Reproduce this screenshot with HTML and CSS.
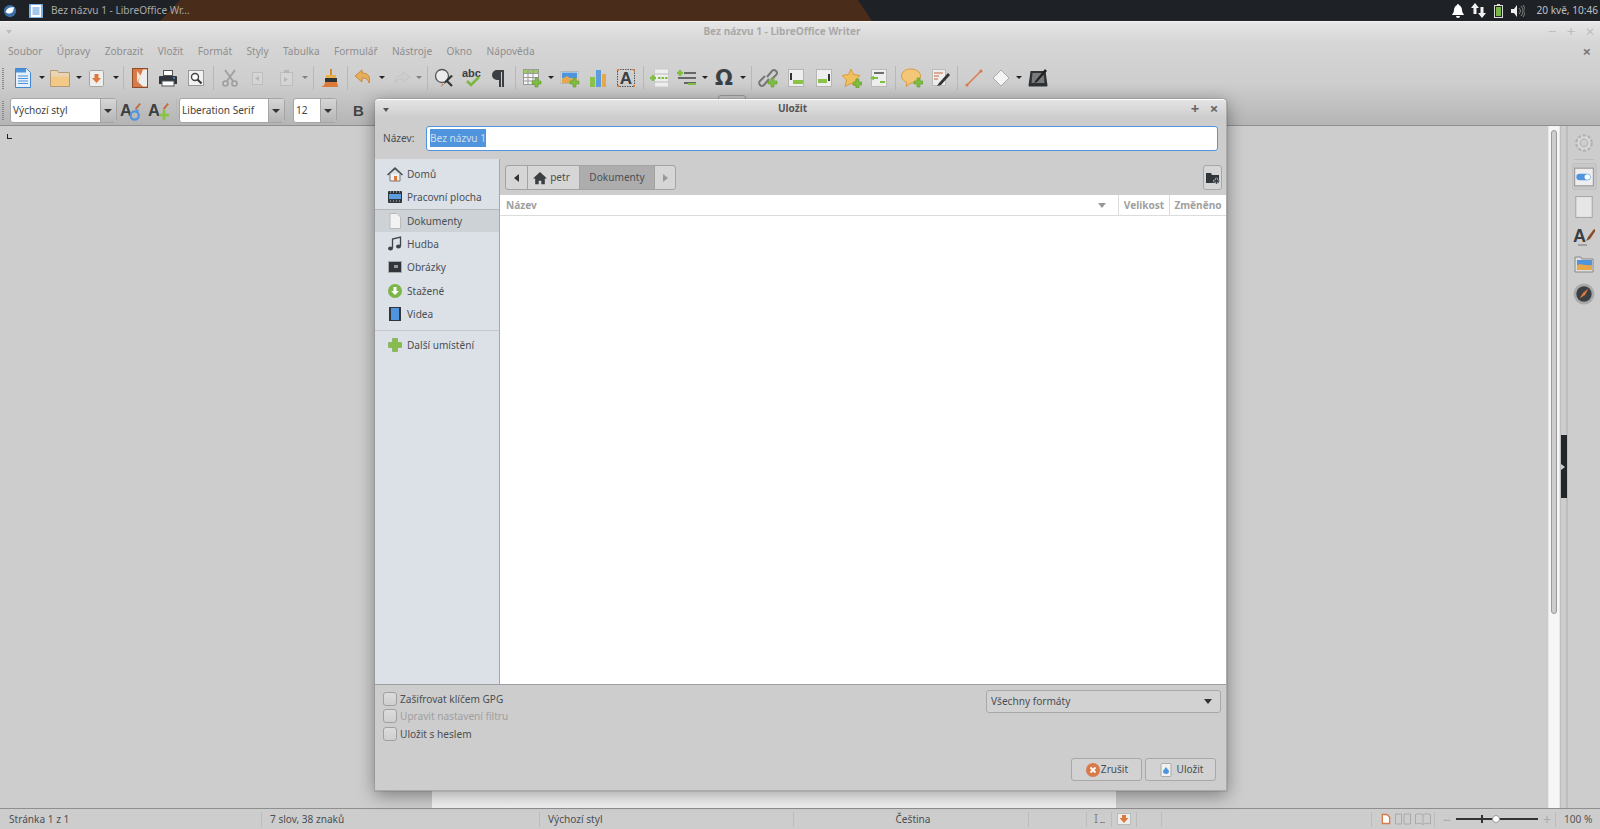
FILE: index.html
```html
<!DOCTYPE html>
<html lang="cs">
<head>
<meta charset="utf-8">
<title>Bez názvu 1 - LibreOffice Writer</title>
<link rel="stylesheet" href="styles.css">
</head>
<body>
<svg class="defs" aria-hidden="true">
  <symbol id="plus" viewBox="0 0 20 20"><path d="M10 11h3V8h3v3h3v3h-3v3h-3v-3h-3z" fill="#7fbf3f" stroke="#5f9a2c" stroke-width=".6"/></symbol>
  <symbol id="new" viewBox="0 0 20 20"><path d="M2.500 .5h11l4 4v15h-15z" fill="#e6effa" stroke="#3e88d0"/><path d="M3 1h10v3.500H3z" fill="#4b92d8"/><path d="M5 8h10M5 10.500h10M5 13h10M5 15.500h10" stroke="#4b92d8"/></symbol>
  <symbol id="folder" viewBox="0 0 20 20"><path d="M.5 4.500V2.500h7l1 2h11v14H.5z" fill="#e9d5b4" stroke="#b49a78"/><path d="M1 8.500h18v9.500H1z" fill="#f2c987"/></symbol>
  <symbol id="save" viewBox="0 0 20 20"><rect x="2.500" y="2.500" width="14" height="16" rx="1" fill="#eee" stroke="#a5a5a5"/><path d="M7.500 6h4v4h2.500l-4.500 5L5 10h2.500z" fill="#dd7a3a"/></symbol>
  <symbol id="pdf" viewBox="0 0 20 20"><rect x="2.500" y=".5" width="15" height="19" fill="#d87a49" stroke="#8d4c28"/><path d="M13 1.500h4v17h-4L8 14z" fill="#eee"/><path d="M7 3l4 5-4 6z" fill="#f4e6d8"/></symbol>
  <symbol id="print" viewBox="0 0 20 20"><rect x="5.500" y="2.500" width="9" height="5" fill="#fff" stroke="#555"/><path d="M2 8h16a1 1 0 0 1 1 1v7H1V9a1 1 0 0 1 1-1z" fill="#30363c"/><rect x="4" y="13" width="12" height="5" fill="#fff" stroke="#555"/><path d="M15 10h2" stroke="#4f94dc" stroke-width="1.500"/></symbol>
  <symbol id="preview" viewBox="0 0 20 20"><rect x="2.500" y="2.500" width="15" height="15" fill="#f2f2f2" stroke="#999"/><circle cx="9" cy="9" r="3.500" fill="#fff" stroke="#444" stroke-width="1.400"/><path d="M11.500 11.500l4 4" stroke="#333" stroke-width="2"/></symbol>
  <symbol id="cut" viewBox="0 0 20 20"><path d="M5 2l8 11M15 2L7 13" stroke="#666" stroke-width="1.800" fill="none"/><circle cx="5.500" cy="15.500" r="2.500" fill="none" stroke="#666" stroke-width="1.600"/><circle cx="14.500" cy="15.500" r="2.500" fill="none" stroke="#666" stroke-width="1.600"/></symbol>
  <symbol id="copy" viewBox="0 0 20 20"><rect x="4.500" y="4.500" width="10" height="12" fill="#ddd" stroke="#aaa"/><path d="M11 8l-4 2.500 4 2.500z" fill="#999"/></symbol>
  <symbol id="paste" viewBox="0 0 20 20"><rect x="4.500" y="4.500" width="12" height="13" fill="#ddd" stroke="#aaa"/><path d="M8 2h5v3H8z" fill="#999"/><path d="M8 9l4 2.500L8 14z" fill="#999"/></symbol>
  <symbol id="brush" viewBox="0 0 20 20"><path d="M10 1h2v7h-2z" fill="#d98a2f"/><path d="M6 7h10v3H6z" fill="#e8b04c"/><path d="M5 10h12v4H5z" fill="#2f3338"/><path d="M5 14h12l1 5H1c2-1 4-2 4-5z" fill="#dd7a3a"/></symbol>
  <symbol id="undo" viewBox="0 0 20 20"><path d="M8 2L1 8l7 6v-4c4 0 6 1 7 5 2-6-1-10-7-10z" fill="#e8ad5a" stroke="#c98a3a"/></symbol>
  <symbol id="redo" viewBox="0 0 20 20"><path d="M12 4l7 5-7 5v-3c-4 0-6 1-7 4-1-5 1-8 7-8z" fill="#ccc" stroke="#b5b5b5"/></symbol>
  <symbol id="find" viewBox="0 0 20 20"><circle cx="8" cy="8" r="6.500" fill="#ececec" stroke="#555" stroke-width="1.300"/><path d="M12.500 12.500l5.500 5.500" stroke="#333" stroke-width="2.200"/><path d="M19 8l-6 6-3 2 1-3 6-6z" fill="#333"/><path d="M10 16l-3 3 1-3z" fill="#dd7a3a"/></symbol>
  <symbol id="para" viewBox="0 0 20 20"><path d="M15 2H8a5 5 0 0 0 0 10h2v7h2V4h1v15h2z" fill="#3a3f44"/></symbol>
  <symbol id="table" viewBox="0 0 20 20"><rect x="1.500" y="1.500" width="15" height="15" fill="#f6f6f6" stroke="#999"/><path d="M2 2h14v3H2z" fill="#9ccb62"/><path d="M1.500 5.500h15M1.500 9.500h15M1.500 13h15M6 2v14M11 2v14" stroke="#999" fill="none"/><use href="#plus" width="20" height="20" x="0" y="2"/></symbol>
  <symbol id="image" viewBox="0 0 20 20"><rect x="1" y="3.500" width="17" height="12" fill="#eee" stroke="#b5b5b5"/><path d="M2 4.500h15v6H2z" fill="#4f94dc"/><path d="M2 11l5-3 4 3 6-1v5H2z" fill="#e8a84a"/><use href="#plus" width="20" height="20" x="0" y="2"/></symbol>
  <symbol id="chart" viewBox="0 0 20 20"><path d="M2 9h5v10H2z" fill="#8bc34a"/><path d="M8 2h5v17H8z" fill="#5c9de0"/><path d="M14 6h4v13h-4z" fill="#e8a84a"/></symbol>
  <symbol id="field" viewBox="0 0 20 20"><rect x="4.500" y="1" width="14" height="18" fill="#eee" stroke="#ccc"/><path d="M4 6h15M4 14h15" stroke="#bbb"/><path d="M8 10h10" stroke="#7fbf3f" stroke-width="2" stroke-dasharray="2.500 1"/><path d="M0 10h6M3 7v6" stroke="#7fbf3f" stroke-width="2.400"/></symbol>
  <symbol id="list" viewBox="0 0 20 20"><path d="M7 5h12M1 10h18M7 15h12" stroke="#444" stroke-width="1.500"/><path d="M0 5h6M3 2v6" stroke="#7fbf3f" stroke-width="2.400"/><path d="M11 16h8" stroke="#7fbf3f" stroke-width="2"/></symbol>
  <symbol id="link" viewBox="0 0 20 20"><path d="M9 9l5-6a2.500 2.500 0 0 1 4 4l-5 5M11 11l-5 6a2.500 2.500 0 0 1-4-4l5-5" fill="none" stroke="#777" stroke-width="2"/><use href="#plus" width="20" height="20" x="0" y="2"/></symbol>
  <symbol id="foot" viewBox="0 0 20 20"><rect x="2.500" y="1.500" width="15" height="17" fill="#eee" stroke="#b5b5b5"/><path d="M4 5h2v7H4z" fill="#333"/><path d="M7 12h10v4H7z" fill="#8bc34a"/></symbol>
  <symbol id="end" viewBox="0 0 20 20"><rect x="2.500" y="1.500" width="15" height="17" fill="#eee" stroke="#b5b5b5"/><path d="M14 6h2v7h-2z" fill="#333"/><path d="M4 11h9v4H4z" fill="#8bc34a"/></symbol>
  <symbol id="star" viewBox="0 0 20 20"><path d="M9 1l2.500 5.500L18 7.500l-4.500 4.500 1 6.500L9 15.500l-6 3 1.500-6.500L0 7.500 6.500 6.500z" fill="#f0c05e" stroke="#dd9a3f"/><use href="#plus" width="20" height="20" x="1" y="3"/></symbol>
  <symbol id="xref" viewBox="0 0 20 20"><rect x="2.500" y="1.500" width="15" height="17" fill="#eee" stroke="#bbb"/><path d="M5 5h10" stroke="#444" stroke-width="1.500"/><path d="M1 10l4-2.500v1.500h4v2H5v1.500z" fill="#7fbf3f"/><path d="M11 14h5" stroke="#7fbf3f" stroke-width="2"/></symbol>
  <symbol id="comment" viewBox="0 0 22 20"><path d="M10 1c5.500 0 9.500 3 9.500 7s-4 7-9.500 7l-5 3.500 1-4C3 13 .5 11 .5 8 .5 4 4.500 1 10 1z" fill="#f2c878" stroke="#dd9a3f"/><use href="#plus" width="20" height="20" x="3" y="2"/></symbol>
  <symbol id="track" viewBox="0 0 20 20"><rect x="2.500" y="1.500" width="13" height="16" fill="#eee" stroke="#bbb"/><path d="M4 5h9M4 8h5M4 11h4" stroke="#c5683a"/><path d="M18 5L9 15l-2 3 4-1 9-10z" fill="#333"/></symbol>
  <symbol id="line" viewBox="0 0 20 20"><path d="M3 17L17 3" stroke="#d87a49" stroke-width="1.400"/><circle cx="3" cy="17" r="1.600" fill="#d87a49"/><circle cx="17" cy="3" r="1.600" fill="#d87a49"/></symbol>
  <symbol id="diamond" viewBox="0 0 20 20"><path d="M10 2l8 8-8 8-8-8z" fill="#f4f4f4" stroke="#aaa"/></symbol>
  <symbol id="draw" viewBox="0 0 20 20"><path d="M2.500 3h15l2 14.500a1 1 0 0 1-1 1h-17a1 1 0 0 1-1-1z" fill="#2d3237"/><path d="M4.500 5h11l1 10h-13z" fill="#7a7a7a"/><path d="M17 1L8 12l-2 3 3-1 10-11z" fill="#222"/></symbol>
  <symbol id="home" viewBox="0 0 16 16"><path d="M8 1L0 8.500h2.500V15h4v-4h3v4h4V8.500H16z" fill="#3a3f44"/></symbol>
  <symbol id="home2" viewBox="0 0 16 16"><path d="M3 8v7h10V8" fill="#f2f2f2" stroke="#777"/><path d="M8 1L0 8.500l1 1L8 3.500l7 6 1-1z" fill="#4a4f54"/><path d="M7 10h3v5H7z" fill="#dd7a3a"/></symbol>
  <symbol id="desk" viewBox="0 0 16 16"><rect x="1" y="2" width="14" height="12" rx="1" fill="#30363c"/><path d="M2 5h12v5H2z" fill="#5c9de0"/><path d="M3 3h1M6 3h1M9 3h1M12 3h1M3 12h1M6 12h1M9 12h1M12 12h1" stroke="#ccc"/></symbol>
  <symbol id="doc" viewBox="0 0 16 16"><path d="M3 .500h7l3.500 3.500v11.500H3z" fill="#f2f2f2" stroke="#bbb"/></symbol>
  <symbol id="music" viewBox="0 0 16 16"><path d="M5.500 12V3l8-2v9" fill="none" stroke="#3e4348" stroke-width="1.300"/><ellipse cx="3.500" cy="12.500" rx="2.500" ry="2" fill="#3e4348"/><ellipse cx="11.500" cy="10.500" rx="2.500" ry="2" fill="#3e4348"/></symbol>
  <symbol id="pics" viewBox="0 0 16 16"><rect x="1.500" y="2.500" width="13" height="11" fill="#30363c" stroke="#aaa"/><rect x="7" y="6" width="4" height="3" fill="#999"/></symbol>
  <symbol id="down" viewBox="0 0 16 16"><circle cx="8" cy="8" r="7" fill="#7ab648"/><path d="M6.500 4h3v4h2.500L8 12 4 8h2.500z" fill="#fff"/></symbol>
  <symbol id="video" viewBox="0 0 16 16"><rect x="2" y="1" width="12" height="14" fill="#30363c"/><rect x="4" y="2" width="8" height="12" fill="#4f94dc"/></symbol>
  <symbol id="more" viewBox="0 0 16 16"><path d="M5.500 1.500h5v4h4v5h-4v4h-5v-4h-4v-5h4z" fill="#86bc4c" stroke="#6f9f3c" stroke-width=".5"/></symbol>
  <symbol id="newfolder" viewBox="0 0 16 16"><path d="M1 3h5l1 2h7v8H1z" fill="#30363c"/><path d="M8.500 10h2V8h2v2h2v2h-2v2h-2v-2h-2z" fill="#30363c" stroke="#d6d6d6" stroke-width=".5"/></symbol>
  <symbol id="gear" viewBox="0 0 20 20"><circle cx="10" cy="10" r="7" fill="#ddd" stroke="#aaa" stroke-width="2" stroke-dasharray="3 1.500"/><circle cx="10" cy="10" r="3.500" fill="#cdcdcd" stroke="#aaa"/></symbol>
  <symbol id="props" viewBox="0 0 20 20"><rect x="1.500" y="2" width="17" height="16" fill="#eee" stroke="#999"/><rect x="3" y="7" width="13" height="6" rx="3" fill="#4f94dc"/><circle cx="13" cy="10" r="2.500" fill="#fff"/></symbol>
  <symbol id="page" viewBox="0 0 20 20"><rect x="2.500" y=".5" width="15" height="19" fill="#e6e6e6" stroke="#aaa"/></symbol>
  <symbol id="gallery" viewBox="0 0 22 20"><path d="M2 2h6l1 2h11v13H2z" fill="#ddd" stroke="#888"/><path d="M4 5h15v10H4z" fill="#4f94dc"/><path d="M4 10c5-2 6 1 15 0v5H4z" fill="#e8a84a"/></symbol>
  <symbol id="nav" viewBox="0 0 20 20"><circle cx="10" cy="10" r="9.500" fill="#aaa"/><circle cx="10" cy="10" r="7" fill="#3a3f44"/><path d="M14 5l-3 6-5 3 3-5z" fill="#dd7a3a"/></symbol>
  <symbol id="zrusit" viewBox="0 0 16 16"><circle cx="8" cy="8" r="7" fill="#d87a49"/><path d="M5.500 5.500l5 5M10.500 5.500l-5 5" stroke="#fff" stroke-width="1.800"/></symbol>
  <symbol id="ulozit" viewBox="0 0 16 16"><rect x="3" y="1.500" width="10" height="13" rx="1" fill="#f0f0f0" stroke="#aaa"/><path d="M8 5l3 4a3 3 0 0 1-6 0z" fill="#4f94dc"/></symbol>
</svg>

<header class="panel">
  <svg class="ic panel-logo" viewBox="0 0 16 16"><circle cx="8" cy="8" r="7" fill="#3c6ea8"/><path d="M3 9c1-4 5-6 10-5-1 1-1 2-1 3-1 4-6 5-9 2z" fill="#fff"/></svg>
  <div class="task">
    <svg class="ic task-ic" viewBox="0 0 14 14"><rect width="14" height="14" rx="1" fill="#7fb0e6"/><rect x="2" y="1" width="10" height="12" fill="#fff"/><path d="M3.500 4h7M3.500 6h7M3.500 8h7M3.500 10h7" stroke="#4b92d8"/></svg>
    <span>Bez názvu 1 - LibreOffice Wr...</span>
  </div>
  <div class="tray">
    <svg class="ic tray-bell" viewBox="0 0 12 14"><path d="M6 0c-1 0-1 1-1 1-2 1-3 3-3 5 0 3-2 4-2 5h12c0-1-2-2-2-5 0-2-1-4-3-5 0 0 0-1-1-1zM4 12a2 2 0 0 0 4 0z" fill="#fff"/></svg>
    <svg class="ic tray-net" viewBox="0 0 15 15"><path d="M4 0l4 5H5.500v6h-3V5H0zM11 15l4-5h-2.500V4h-3v6H7z" fill="#f2f2f2"/></svg>
    <svg class="ic tray-bat" viewBox="0 0 9 14"><path d="M3 0h3v1h3v13H0V1h3z" fill="#ddd"/><rect x="1" y="2" width="7" height="11" fill="#222"/><rect x="2" y="3" width="5" height="9" fill="#7ab648"/></svg>
    <svg class="ic tray-vol" viewBox="0 0 14 12"><path d="M0 4h3l3-4v12L3 8H0z" fill="#eee"/><path d="M8 3a4 4 0 0 1 0 6M10 1a7 7 0 0 1 0 10M12 0a9 9 0 0 1 0 12" fill="none" stroke="#888"/></svg>
    <time class="clock">20 kvě, 10:46</time>
  </div>
</header>

<main class="app">
  <div class="chrome">
    <div class="titlebar">
      <span class="wm-menu"></span>
      <span class="title">Bez názvu 1 - LibreOffice Writer</span>
      <span class="wm-buttons"><span>−</span><span>+</span><span>×</span></span>
    </div>
    <nav class="menubar">
      <span>Soubor</span><span>Úpravy</span><span>Zobrazit</span><span>Vložit</span><span>Formát</span><span>Styly</span><span>Tabulka</span><span>Formulář</span><span>Nástroje</span><span>Okno</span><span>Nápověda</span>
      <b class="menu-close">×</b>
    </nav>
    <div class="toolbar tb-main">
      <i class="grip"></i>
      <span class="tb"><svg class="ic20"><use href="#new"/></svg></span><span class="dd n9"></span>
      <span class="tb"><svg class="ic20"><use href="#folder"/></svg></span><span class="dd n9"></span>
      <span class="tb"><svg class="ic20"><use href="#save"/></svg></span><span class="dd n9"></span>
      <i class="sep"></i>
      <span class="tb"><svg class="ic20"><use href="#pdf"/></svg></span>
      <span class="tb"><svg class="ic20"><use href="#print"/></svg></span>
      <span class="tb"><svg class="ic20"><use href="#preview"/></svg></span>
      <i class="sep"></i>
      <span class="tb off"><svg class="ic20"><use href="#cut"/></svg></span>
      <span class="tb off"><svg class="ic20"><use href="#copy"/></svg></span>
      <span class="tb off"><svg class="ic20"><use href="#paste"/></svg></span><span class="dd off"></span>
      <i class="sep"></i>
      <span class="tb"><svg class="ic20"><use href="#brush"/></svg></span>
      <i class="sep"></i>
      <span class="tb w27"><svg class="ic20"><use href="#undo"/></svg></span><span class="dd"></span>
      <span class="tb w27 off"><svg class="ic20"><use href="#redo"/></svg></span><span class="dd off"></span>
      <i class="sep"></i>
      <span class="tb"><svg class="ic20"><use href="#find"/></svg></span>
      <span class="tb"><svg class="ic22" viewBox="0 0 22 22"><text x="1" y="10" class="svg-bold svg-abc">abc</text><path d="M6 14l4 4 8-8" fill="none" stroke="#79b83b" stroke-width="2.500"/></svg></span>
      <span class="tb w26"><svg class="ic20"><use href="#para"/></svg></span>
      <i class="sep"></i>
      <span class="tb"><svg class="ic20"><use href="#table"/></svg></span><span class="dd"></span>
      <span class="tb"><svg class="ic20"><use href="#image"/></svg></span>
      <span class="tb"><svg class="ic20"><use href="#chart"/></svg></span>
      <span class="tb"><svg class="ic20" viewBox="0 0 20 20"><rect x="1.500" y="1.500" width="17" height="17" fill="none" stroke="#555" stroke-dasharray="1.500 1"/><path d="M1 1h2v2H1zM17 1h2v2h-2zM1 17h2v2H1zM17 17h2v2h-2z" fill="#dd7a3a"/><text x="10" y="15.500" text-anchor="middle" class="svg-bold svg-a">A</text></svg></span>
      <i class="sep"></i>
      <span class="tb"><svg class="ic20"><use href="#field"/></svg></span>
      <span class="tb w26"><svg class="ic20"><use href="#list"/></svg></span><span class="dd"></span>
      <span class="tb omega">Ω</span><span class="dd"></span>
      <i class="sep"></i>
      <span class="tb"><svg class="ic20"><use href="#link"/></svg></span>
      <span class="tb"><svg class="ic20"><use href="#foot"/></svg></span>
      <span class="tb"><svg class="ic20"><use href="#end"/></svg></span>
      <span class="tb"><svg class="ic20"><use href="#star"/></svg></span>
      <span class="tb w26"><svg class="ic20"><use href="#xref"/></svg></span>
      <i class="sep"></i>
      <span class="tb"><svg class="ic22"><use href="#comment"/></svg></span>
      <span class="tb"><svg class="ic20"><use href="#track"/></svg></span>
      <i class="sep"></i>
      <span class="tb"><svg class="ic20"><use href="#line"/></svg></span>
      <span class="tb w26"><svg class="ic20"><use href="#diamond"/></svg></span><span class="dd"></span>
      <span class="tb"><svg class="ic20"><use href="#draw"/></svg></span>
    </div>
    <div class="toolbar tb-format">
      <i class="grip"></i>
      <div class="combo combo-style"><span>Výchozí styl</span><b></b></div>
      <span class="tb"><svg class="ic22" viewBox="0 0 24 22"><text x="0" y="17" class="svg-bold svg-st">A</text><path d="M22 3l-5 6" stroke="#c5683a" stroke-width="2"/><circle cx="16" cy="16" r="4.500" fill="none" stroke="#4f94dc" stroke-width="2.400"/><path d="M17 9l4 1-2 3z" fill="#4f94dc"/></svg></span>
      <span class="tb"><svg class="ic22" viewBox="0 0 24 22"><text x="0" y="17" class="svg-bold svg-st">A</text><path d="M22 3l-5 6" stroke="#c5683a" stroke-width="2"/><path d="M12 14h4v-4h3v4h4v3h-4v4h-3v-4h-4z" fill="#8bc34a"/></svg></span>
      <i class="sep"></i>
      <div class="combo combo-font"><span>Liberation Serif</span><b></b></div>
      <div class="combo combo-size"><span>12</span><b></b></div>
      <span class="bold-btn">B</span>
      <span class="peek"></span>
    </div>
  </div>

  <div class="workspace">
    <div class="docarea"><div class="cursor-mark"></div><div class="page"></div></div>
    <div class="vscroll"><div class="thumb"></div></div>
    <div class="gutter"><div class="handle"><i></i></div></div>
    <aside class="deck">
      <span class="deck-ic dim"><svg class="ic22"><use href="#gear"/></svg></span>
      <i class="deck-line"></i>
      <span class="deck-ic active"><svg class="ic22"><use href="#props"/></svg></span>
      <span class="deck-ic"><svg class="ic22"><use href="#page"/></svg></span>
      <span class="deck-ic"><svg class="ic22" viewBox="0 0 22 22"><text x="0" y="17" class="svg-bold svg-st">A</text><path d="M21 4l-6 8-2 4 4-2 6-9z" fill="#884d2c"/><path d="M5 20h9" stroke="#777"/></svg></span>
      <span class="deck-ic"><svg class="ic22"><use href="#gallery"/></svg></span>
      <span class="deck-ic"><svg class="ic22"><use href="#nav"/></svg></span>
    </aside>
  </div>

  <footer class="status">
    <span class="st st-page">Stránka 1 z 1</span>
    <span class="st st-words">7 slov, 38 znaků</span>
    <span class="st st-style">Výchozí styl</span>
    <span class="st st-lang">Čeština</span>
    <span class="st st-a"></span>
    <span class="st st-b"><span class="ins">I<u></u></span></span>
    <span class="st st-c"><svg class="ic12" viewBox="0 0 14 12"><rect x=".5" y=".5" width="13" height="11" fill="#eee" stroke="#bbb"/><path d="M5 2h4v3h2.500L7 10 2.500 5H5z" fill="#dd7a3a"/></svg></span>
    <span class="st st-d"></span>
    <span class="st st-e"></span>
    <span class="st st-views">
      <svg class="ic-view" viewBox="0 0 11 12"><path d="M1.500 1h5l3 3v7h-8z" fill="#fff" stroke="#d87a49" stroke-width="1.500"/></svg>
      <svg class="ic-view2" viewBox="0 0 16 12"><path d="M.5 1h6v10h-6zM9 1h6.500v10H9z" fill="none" stroke="#aaa"/></svg>
      <svg class="ic-view2" viewBox="0 0 16 12"><path d="M8 2C6 .5 3 .5.500 1.500v9.500C3 10 6 10 8 11.500 10 10 13 10 15.500 11V1.500C13 .5 10 .5 8 2zM8 2v9.500" fill="none" stroke="#aaa"/></svg>
    </span>
    <span class="st st-zoom"><em>−</em><span class="slider"><i class="tick"></i><i class="knob"></i></span><em>+</em></span>
    <span class="st st-pct">100 %</span>
  </footer>

  <section class="dialog">
    <div class="dlg-title">
      <span class="wm-menu dark"></span>
      <strong>Uložit</strong>
      <span class="dlg-btns"><span>+</span><span>×</span></span>
    </div>
    <div class="name-row">
      <label>Název:</label>
      <div class="name-input"><mark>Bez názvu 1</mark></div>
    </div>
    <div class="browser">
      <ul class="places">
        <li><svg class="ic16"><use href="#home2"/></svg>Domů</li>
        <li><svg class="ic16"><use href="#desk"/></svg>Pracovní plocha</li>
        <li class="current"><svg class="ic16"><use href="#doc"/></svg>Dokumenty</li>
        <li><svg class="ic16"><use href="#music"/></svg>Hudba</li>
        <li><svg class="ic16"><use href="#pics"/></svg>Obrázky</li>
        <li><svg class="ic16"><use href="#down"/></svg>Stažené</li>
        <li><svg class="ic16"><use href="#video"/></svg>Videa</li>
        <li class="divider"></li>
        <li><svg class="ic16"><use href="#more"/></svg>Další umístění</li>
      </ul>
      <div class="files">
        <div class="pathbar">
          <div class="crumbs">
            <span class="crumb c-back"><i class="tri-l"></i></span>
            <span class="crumb c-home"><svg class="ic14"><use href="#home"/></svg>petr</span>
            <span class="crumb c-cur">Dokumenty</span>
            <span class="crumb c-fwd"><i class="tri-r"></i></span>
          </div>
          <span class="mkdir"><svg class="ic16"><use href="#newfolder"/></svg></span>
        </div>
        <div class="list-head">
          <span class="col-name">Název<i class="tri-d"></i></span>
          <span class="col-size">Velikost</span>
          <span class="col-date">Změněno</span>
        </div>
        <div class="list-body"></div>
      </div>
    </div>
    <div class="dlg-foot">
      <div class="foot-top">
        <div class="checks">
          <label class="check"><i></i>Zašifrovat klíčem GPG</label>
          <label class="check disabled"><i></i>Upravit nastavení filtru</label>
          <label class="check"><i></i>Uložit s heslem</label>
        </div>
        <div class="format">Všechny formáty<i class="tri-d dark"></i></div>
      </div>
      <div class="actions">
        <button class="btn btn-cancel" type="button"><svg class="ic16"><use href="#zrusit"/></svg>Zrušit</button>
        <button class="btn" type="button"><svg class="ic16"><use href="#ulozit"/></svg>Uložit</button>
      </div>
    </div>
  </section>
</main>
</body>
</html>
```

FILE: styles.css
```css
* { box-sizing: border-box; }
html, body { margin: 0; padding: 0; }
body {
  width: 1600px; height: 829px; overflow: hidden;
  display: flex; flex-direction: column;
  font: 10.1px/1.2 "Noto Sans", "Open Sans", sans-serif;
  color: #4a4f54; background: #cdcdcd;
}
.defs { position: absolute; width: 0; height: 0; }
.svg-bold { font-family: "Liberation Sans", sans-serif; font-weight: 700; fill: #3a3f44; }
.svg-abc { font-size: 11px; }
.svg-a { font-size: 17px; }
.svg-st { font-size: 18px; }
.ic { display: block; flex: none; }
.ic20 { width: 20px; height: 20px; display: block; }
.ic22 { width: 22px; height: 22px; display: block; }
.ic16 { width: 16px; height: 16px; display: block; flex: none; }
.ic14 { width: 14px; height: 14px; display: block; flex: none; }
.ic12 { width: 14px; height: 12px; display: block; }

/* desktop panel */
.panel {
  height: 21px; flex: none; display: flex; align-items: center; position: relative;
  background: #1e2226; color: #a9a9a9;
}
.panel::before {
  content: ""; position: absolute; inset: 0; background: #4a2c1b;
  clip-path: polygon(180px 0, 858px 0, 872px 100%, 160px 100%);
}
.panel > * { position: relative; }
.panel-logo { width: 14px; height: 14px; margin-left: 3px; }
.task { display: flex; align-items: center; width: 143px; margin-left: 12px; white-space: nowrap; }
.task-ic { width: 14px; height: 14px; }
.task span { margin-left: 8px; }
.tray { margin-left: auto; display: flex; align-items: center; padding-right: 2px; }
.tray-bell { width: 12px; height: 14px; }
.tray-net { width: 15px; height: 15px; margin-left: 7px; }
.tray-bat { width: 9px; height: 14px; margin-left: 8px; }
.tray-vol { width: 14px; height: 12px; margin-left: 8px; }
.clock { margin-left: 11px; color: #c0c0c0; }

/* main window */
.app { flex: 1; min-height: 0; display: flex; flex-direction: column; position: relative; }
.chrome {
  flex: none; height: 105px;
  background: linear-gradient(#e6e6e6 0, #d6d6d6 20px, #cecece 60px, #b4b4b4 104px);
  border-top: 1px solid #f4f4f4; border-bottom: 1px solid #8f8f8f;
}
.titlebar { height: 18px; display: flex; align-items: center; position: relative; padding: 0 36px 0 0; justify-content: center; }
.wm-menu { position: absolute; left: 6px; top: 8px; width: 0; height: 0; border: 3px solid transparent; border-top: 4px solid #bcbcbc; border-bottom: 0; }
.wm-menu.dark { border-top-color: #555; left: 8px; top: 8px; }
.title { color: #a9a9a9; font-weight: 700; }
.wm-buttons { position: absolute; right: 3px; top: 0; display: flex; gap: 5px; color: #bdbdbd; font-size: 15px; line-height: 18px; }
.wm-buttons span { width: 14px; text-align: center; }
.menubar { height: 22px; display: flex; align-items: center; padding-left: 8px; color: #8e8e8e; position: relative; }
.menubar span { margin-right: 14.4px; }
.menu-close { margin-left: auto; margin-right: 9px; font-size: 15px; color: #777; }
.toolbar { display: flex; align-items: center; position: relative; }
.tb-main { height: 33px; padding: 0 0 2px 9px; }
.tb-format { height: 31px; padding-left: 10px; }
.grip { position: absolute; left: 2px; top: 6px; bottom: 6px; width: 2px; background: repeating-linear-gradient(#888 0 1px, transparent 1px 2px); }
.tb { width: 28px; height: 24px; display: flex; align-items: center; justify-content: center; flex: none; }
.tb.w27 { width: 27px; }
.tb.w26 { width: 26px; }
.omega { font: 700 21px/24px "DejaVu Sans", sans-serif; color: #3a3f44; }
.off { opacity: .45; }
.dd { width: 10px; height: 24px; flex: none; position: relative; }
.dd.n9 { width: 9px; }
.dd::after { content: ""; position: absolute; left: 2px; top: 10px; border: 3px solid transparent; border-top: 3px solid #222; border-bottom: 0; }
.sep { width: 1px; height: 24px; background: #b8b8b8; margin: 0 2px 0 3px; flex: none; }
.combo { display: flex; height: 25px; flex: none; border: 1px solid #a5a5a5; border-radius: 3px; background: #fff; overflow: hidden; }
.combo span { flex: 1; padding: 5px 2px; color: #444; white-space: nowrap; }
.combo b { width: 16px; background: linear-gradient(#d6d6d6, #b5b5b5); border-left: 1px solid #a5a5a5; position: relative; }
.combo b::after { content: ""; position: absolute; left: 3px; top: 10px; border: 4px solid transparent; border-top: 4px solid #333; border-bottom: 0; }
.combo-style { width: 107px; }
.combo-font { width: 106px; }
.combo-size { width: 44px; margin-left: 8px; }
.bold-btn { margin-left: 16px; font: 700 15px "Liberation Sans", sans-serif; color: #444; }
.peek { margin-left: 354px; align-self: flex-start; width: 28px; height: 6px; border: 1px solid #999; border-radius: 3px 3px 0 0; }

/* workspace */
.workspace { flex: 1; min-height: 0; display: flex; background: #cdcdcd; }
.docarea { width: 1548px; position: relative; overflow: hidden; }
.cursor-mark { position: absolute; left: 7px; top: 8px; width: 5px; height: 5px; border-left: 1px solid #222; border-bottom: 1px solid #222; }
.page { margin-left: 432px; width: 684px; height: 100%; background: linear-gradient(to bottom, #fff 97%, #f1f1f1); }
.vscroll { width: 12px; flex: none; background: #f6f6f6; border-left: 1px solid #e6e6e6; border-right: 1px solid #e6e6e6; padding: 4px 2px 0; }
.thumb { height: 484px; background: #cdcdcd; border: 1px solid #9a9a9a; border-radius: 5px; }
.gutter { width: 7px; flex: none; border-left: 1px solid #bdbdbd; border-right: 1px solid #bdbdbd; padding-top: 309px; }
.handle { width: 6px; height: 63px; background: #22262a; display: flex; align-items: center; }
.handle i { border: 3px solid transparent; border-left: 4px solid #cfcfcf; border-right: 0; }
.deck { flex: 1; display: flex; flex-direction: column; align-items: center; padding-top: 6px; border-left: 1px solid #bdbdbd; }
.deck-ic { width: 25px; height: 29px; flex: none; display: flex; align-items: center; justify-content: center; border-radius: 3px; }
.deck-ic.dim { height: 22px; opacity: .75; }
.deck-ic.active { background: #c8c8c8; border: 1px solid #c0c0c0; height: 27px; margin-bottom: 2px; }
.deck-line { width: 20px; height: 1px; background: #bbb; margin: 5px 0 3px; }

/* status bar */
.status { height: 21px; flex: none; display: flex; align-items: center; border-top: 1px solid #8f8f8f; background: #cdcdcd; }
.st { height: 15px; display: flex; align-items: center; flex: none; border-right: 1px solid #bcbcbc; white-space: nowrap; padding-left: 8px; }
.st-page { width: 262px; padding-left: 9px; }
.st-words { width: 278px; }
.st-style { width: 254px; }
.st-lang { width: 235px; justify-content: center; padding: 0 0 0 4px; }
.st-a { width: 58px; }
.st-b { width: 25px; padding-left: 7px; }
.ins { color: #888; font-size: 12px; display: flex; align-items: flex-end; }
.ins u { display: block; width: 5px; height: 1px; background: #888; margin: 0 0 3px 2px; }
.st-c { width: 25px; padding-left: 5px; }
.st-d { width: 25px; }
.st-e { width: 210px; }
.st-views { width: 63px; padding-left: 9px; gap: 3px; }
.ic-view { width: 10px; height: 12px; }
.ic-view2 { width: 16px; height: 12px; margin-left: 1px; }
.st-zoom { width: 121px; padding-left: 8px; }
.st-zoom em { font-style: normal; color: #aaa; font-size: 14px; width: 8px; line-height: 15px; text-align: center; }
.slider { width: 82px; height: 2px; background: #333; margin: 0 5px; position: relative; }
.tick { position: absolute; left: 25px; top: -3px; width: 2px; height: 8px; background: #333; }
.knob { position: absolute; left: 36px; top: -3px; width: 8px; height: 8px; border-radius: 50%; background: #fff; border: 1px solid #999; }
.st-pct { border: 0; color: #555; }

/* save dialog */
.dialog {
  position: absolute; left: 375px; top: 78px; width: 852px; height: 692px;
  display: flex; flex-direction: column;
  background: #cdcdcd; border-radius: 4px 4px 0 0; border-right: 1px solid #aaa; border-bottom: 1px solid #aaa;
  box-shadow: 0 4px 18px rgba(0, 0, 0, .4), 0 0 0 1px rgba(0, 0, 0, .08);
}
.dlg-title { height: 19px; flex: none; position: relative; text-align: center; padding-right: 16px; background: linear-gradient(#e4e4e4, #cdcdcd); border-top: 1px solid #fff; border-radius: 4px 4px 0 0; color: #555; line-height: 17px; }
.dlg-btns { position: absolute; right: 5px; top: 0; display: flex; gap: 5px; color: #666; font-size: 15px; font-weight: 700; line-height: 17px; }
.dlg-btns span { width: 14px; text-align: center; }
.name-row { height: 41px; flex: none; display: flex; align-items: center; padding: 0 8px; gap: 10px; }
.name-row label { width: 33px; flex: none; white-space: nowrap; }
.name-input { flex: 1; height: 25px; background: #fff; border: 1px solid #5294e2; border-radius: 3px; padding: 5px 3px; }
mark { background: #4f94dc; color: #cfdde9; padding: 2px 0; }
.browser { flex: 1; min-height: 0; display: flex; border-bottom: 1px solid #9d9d9d; }
.places { width: 125px; flex: none; margin: 0; padding: 3px 0 0; list-style: none; background: #dce1e8; border-right: 1px solid #a5a9ad; }
.places li { height: 23.4px; display: flex; align-items: center; gap: 4px; padding-left: 12px; }
.places .current { background: #cdd2d7; border-top: 1px solid #b5b8bb; }
.places .divider { height: 1px; margin: 4px 0 2.6px; padding: 0; background: #c3c6ca; }
.files { flex: 1; min-width: 0; display: flex; flex-direction: column; }
.pathbar { height: 36px; flex: none; display: flex; justify-content: space-between; padding: 6px 4px 0 5px; }
.crumbs { display: flex; height: 25px; border: 1px solid #a3a3a3; border-radius: 3px; background: #d6d6d6; }
.crumb { display: flex; align-items: center; justify-content: center; border-right: 1px solid #a3a3a3; }
.crumb:last-child { border-right: 0; }
.c-back { width: 22px; }
.c-home { width: 52px; gap: 3px; padding-right: 4px; }
.c-cur { width: 75px; background: #adadad; }
.c-fwd { width: 20px; }
.tri-l { border: 4px solid transparent; border-right: 5px solid #333; border-left: 0; }
.tri-r { border: 4px solid transparent; border-left: 5px solid #999; border-right: 0; }
.mkdir { width: 19px; height: 25px; border: 1px solid #a8a8a8; border-radius: 3px; background: #d6d6d6; display: flex; align-items: center; justify-content: center; }
.list-head { height: 21px; flex: none; display: flex; align-items: center; background: #fff; border-bottom: 1px solid #dcdcdc; font-weight: 700; color: #a0a0a0; }
.list-head span { height: 100%; display: flex; align-items: center; }
.col-name { flex: 1; padding-left: 6px; justify-content: space-between; padding-right: 12px; }
.col-size { width: 51px; justify-content: center; border-left: 1px solid #dcdcdc; }
.col-date { width: 57px; justify-content: center; border-left: 1px solid #dcdcdc; }
.tri-d { border: 4px solid transparent; border-top: 5px solid #999; border-bottom: 0; }
.tri-d.dark { border-top-color: #333; }
.list-body { flex: 1; background: #fff; }
.dlg-foot { height: 105px; flex: none; display: flex; flex-direction: column; justify-content: space-between; padding: 5px 5px 9px 8px; }
.foot-top { display: flex; justify-content: space-between; align-items: flex-start; }
.checks { display: flex; flex-direction: column; }
.check { height: 17.500px; display: flex; align-items: center; gap: 3px; }
.check i { width: 14px; height: 14px; border: 1px solid #a0a0a0; border-radius: 3px; background: linear-gradient(#dcdcdc, #cfcfcf); }
.check.disabled { color: #a0a0a0; }
.format { width: 235px; height: 23px; display: flex; align-items: center; justify-content: space-between; padding: 0 8px 0 4px; border: 1px solid #a8a8a8; border-radius: 3px; background: #d2d2d2; }
.actions { display: flex; justify-content: flex-end; gap: 3px; padding-right: 5px; }
.btn { width: 71px; height: 23px; display: flex; align-items: center; justify-content: center; gap: 3px; padding: 0; border: 1px solid #a8a8a8; border-radius: 3px; background: #d2d2d2; color: #4a4f54; font: inherit; }
.btn-cancel { gap: 0; }
```
